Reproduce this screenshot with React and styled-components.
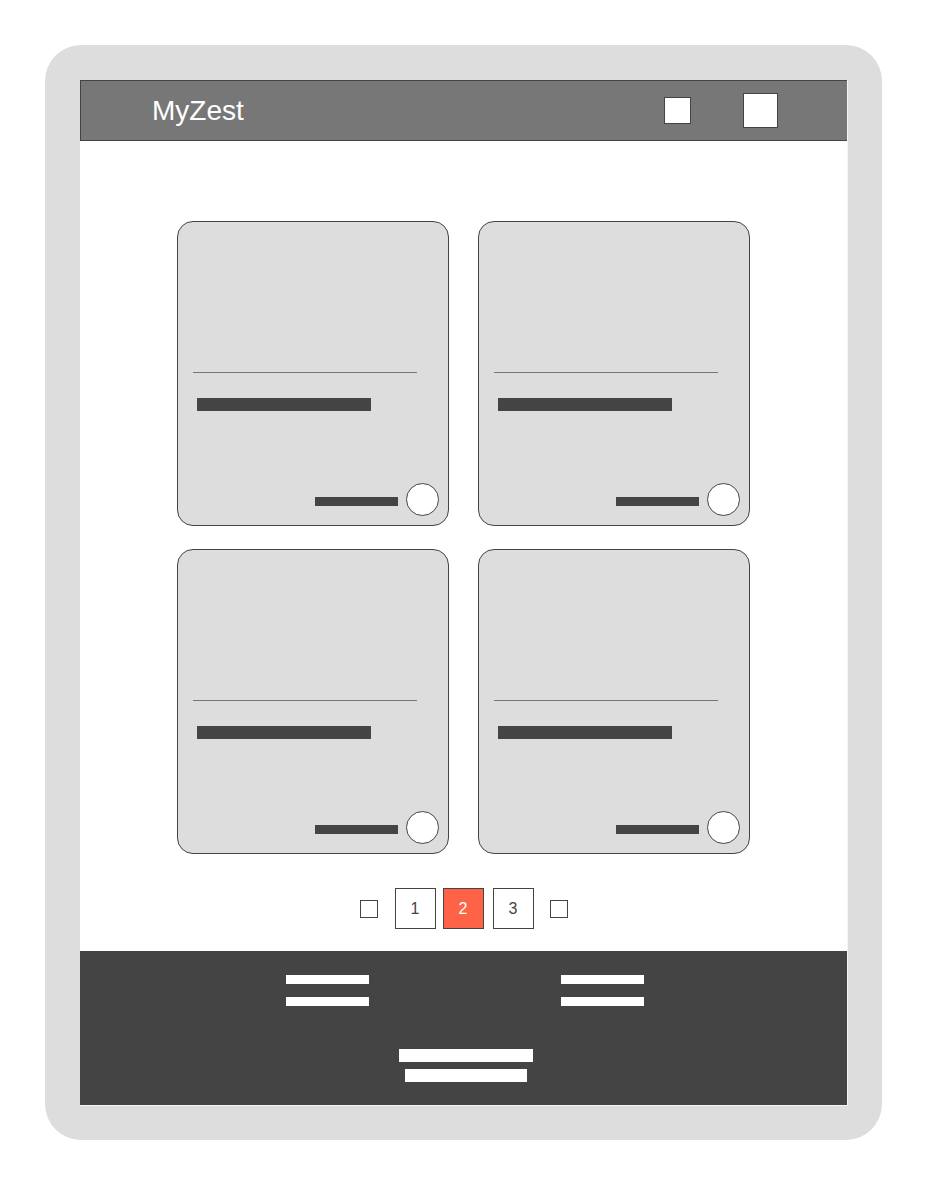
import React from 'react';
import styled, { createGlobalStyle } from 'styled-components';

const Global = createGlobalStyle`
  body {
    margin: 0;
    background: #ffffff;
    font-family: "Liberation Sans", Arial, sans-serif;
  }
  * { box-sizing: border-box; }
`;

const Frame = styled.div`
  margin: 45px 0 0 45px;
  width: 837px;
  height: 1095px;
  padding: 35px 34px 34px 35px;
  background: #dddddd;
  border-radius: 36px;
`;

const Screen = styled.div`
  width: 768px;
  height: 1026px;
  background: #ffffff;
  border-right: 1px solid #f4f4f4;
  border-bottom: 1px solid #f4f4f4;
  display: flex;
  flex-direction: column;
`;

const Header = styled.header`
  height: 61px;
  display: flex;
  align-items: center;
  padding: 0 69px 0 71px;
  background: #777777;
  border: 1px solid #444444;
  border-right: none;
`;

const Logo = styled.div`
  color: #ffffff;
  font-size: 28px;
  line-height: 1;
`;

const HeaderIcons = styled.div`
  margin-left: auto;
  display: flex;
  align-items: center;
  gap: 52px;
`;

const IconBox = styled.div`
  width: ${({ size }) => size}px;
  height: ${({ size }) => size}px;
  background: #ffffff;
  border: 1px solid #444444;
`;

const Main = styled.main`
  padding-top: 80px;
  display: flex;
  flex-direction: column;
  align-items: center;
`;

const Grid = styled.div`
  display: grid;
  grid-template-columns: 272px 272px;
  gap: 23px 29px;
`;

const Card = styled.div`
  height: 305px;
  display: flex;
  flex-direction: column;
  padding: 150px 9px 9px 15px;
  background: #dddddd;
  border: 1px solid #444444;
  border-radius: 16px;
`;

const Divider = styled.div`
  width: 224px;
  border-top: 1px solid #777777;
`;

const TitleBar = styled.div`
  width: 174px;
  height: 13px;
  margin: 25px 0 0 4px;
  background: #444444;
`;

const CardFoot = styled.div`
  margin-top: auto;
  display: flex;
  justify-content: flex-end;
  align-items: center;
  gap: 8px;
`;

const MetaBar = styled.div`
  width: 83px;
  height: 9px;
  margin-top: 3px;
  background: #444444;
`;

const Circle = styled.div`
  width: 33px;
  height: 33px;
  border-radius: 50%;
  background: #ffffff;
  border: 1px solid #444444;
`;

const Pager = styled.nav`
  margin-top: 34px;
  display: flex;
  align-items: center;
`;

const Arrow = styled.div`
  width: 18px;
  height: 18px;
  margin: ${({ side }) => (side === 'left' ? '1px 17px 0 0' : '0 0 0 16px')};
  border: 1px solid #444444;
  background: #ffffff;
`;

const Page = styled.div`
  width: 41px;
  height: 41px;
  margin-left: ${({ gap }) => gap || 0}px;
  display: flex;
  align-items: center;
  justify-content: center;
  font-size: 16px;
  color: ${({ active }) => (active ? '#ffffff' : '#444444')};
  background: ${({ active }) => (active ? '#ff6347' : '#ffffff')};
  border: 1px solid #444444;
`;

const Footer = styled.footer`
  margin-top: 22px;
  height: 154px;
  background: #444444;
  padding-top: 24px;
  display: flex;
  flex-direction: column;
  align-items: center;
`;

const FootRow = styled.div`
  display: flex;
  gap: 192px;
  padding-left: 3px;
`;

const FootCol = styled.div`
  display: flex;
  flex-direction: column;
  align-items: center;
  gap: ${({ gap }) => gap}px;
  margin-top: ${({ top }) => top || 0}px;
  padding-left: ${({ shift }) => shift || 0}px;
`;

const Line = styled.div`
  width: ${({ w }) => w}px;
  height: ${({ h }) => h}px;
  background: #ffffff;
`;

const cards = [1, 2, 3, 4];

export default function App() {
  return (
    <>
      <Global />
      <Frame>
        <Screen>
          <Header>
            <Logo>MyZest</Logo>
            <HeaderIcons>
              <IconBox size={27} />
              <IconBox size={35} />
            </HeaderIcons>
          </Header>
          <Main>
            <Grid>
              {cards.map((c) => (
                <Card key={c}>
                  <Divider />
                  <TitleBar />
                  <CardFoot>
                    <MetaBar />
                    <Circle />
                  </CardFoot>
                </Card>
              ))}
            </Grid>
            <Pager>
              <Arrow side="left" />
              <Page>1</Page>
              <Page gap={7} active>2</Page>
              <Page gap={9}>3</Page>
              <Arrow side="right" />
            </Pager>
          </Main>
          <Footer>
            <FootRow>
              <FootCol gap={13}>
                <Line w={83} h={9} />
                <Line w={83} h={9} />
              </FootCol>
              <FootCol gap={13}>
                <Line w={83} h={9} />
                <Line w={83} h={9} />
              </FootCol>
            </FootRow>
            <FootCol gap={7} top={43} shift={4}>
              <Line w={134} h={13} />
              <Line w={122} h={13} />
            </FootCol>
          </Footer>
        </Screen>
      </Frame>
    </>
  );
}
